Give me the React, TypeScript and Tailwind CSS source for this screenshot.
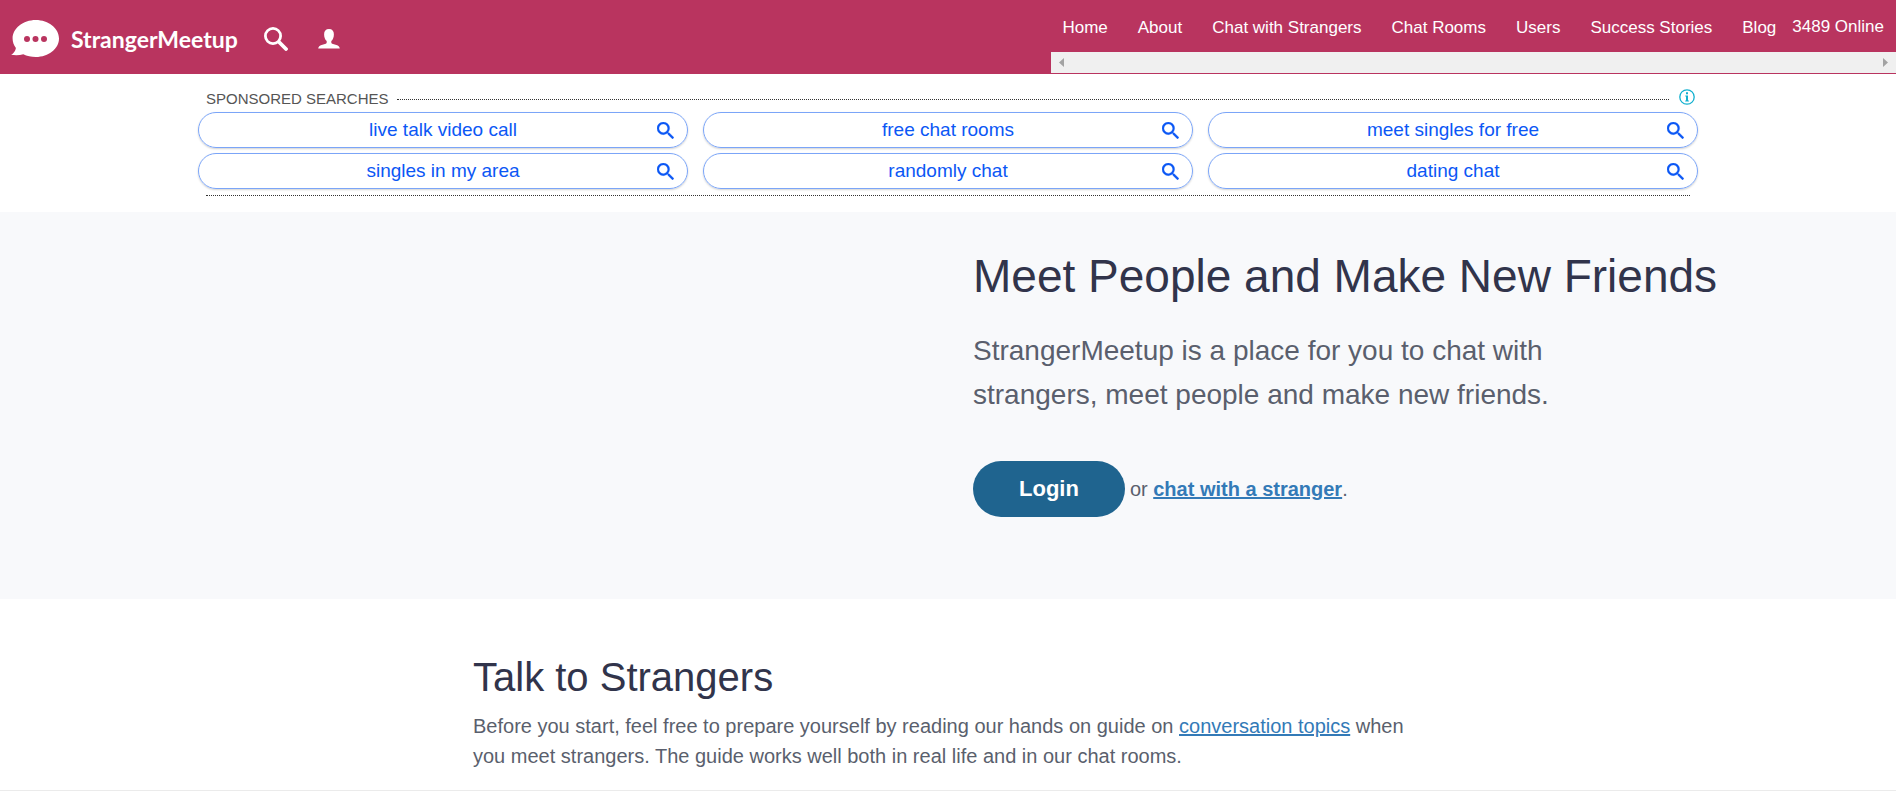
import type { ReactNode } from 'react'

const navLinks = [
  'Home',
  'About',
  'Chat with Strangers',
  'Chat Rooms',
  'Users',
  'Success Stories',
  'Blog',
]

const searches = [
  'live talk video call',
  'free chat rooms',
  'meet singles for free',
  'singles in my area',
  'randomly chat',
  'dating chat',
]

function BubbleLogo() {
  return (
    <svg width="48" height="37" viewBox="0 0 48 37" aria-hidden="true">
      <path
        fill="#fff"
        d="M24.800 0C37.600 0 48 8.300 48 18.500S37.600 37 24.800 37c-4.600 0-8.900-1-12.500-2.800-3.400 1.100-7.600 1.400-12.100.6 2.700-1.600 4.300-4 4.700-6.800C2.700 25.200 1.600 22 1.600 18.500 1.600 8.300 12 0 24.800 0Z"
      />
      <g fill="#b9345f">
        <circle cx="16" cy="19" r="3" />
        <circle cx="24.500" cy="19" r="3" />
        <circle cx="33" cy="19" r="3" />
      </g>
    </svg>
  )
}

function HeaderSearchIcon() {
  return (
    <svg width="24" height="24" viewBox="0 0 24 24" fill="none" stroke="#fff" aria-hidden="true">
      <circle cx="9" cy="9" r="7.600" strokeWidth="2.800" />
      <path d="m15 15 7 7" strokeWidth="3.800" strokeLinecap="round" />
    </svg>
  )
}

function UserIcon() {
  return (
    <svg width="22" height="20" viewBox="0 0 22 20" fill="#fff" aria-hidden="true">
      <path d="M11 0c3.200 0 4.900 2 4.900 5.200 0 3-1 5.500-2.600 6.900v1.500c0 .6.300 1 .9 1.200l4.200 1.200c2 .6 3.100 1.600 3.400 3.500H.2c.3-1.900 1.400-2.900 3.400-3.500l4.200-1.200c.6-.2.900-.6.900-1.200v-1.500C7.100 10.700 6.100 8.200 6.100 5.200 6.100 2 7.800 0 11 0Z" />
    </svg>
  )
}

function PillSearchIcon() {
  return (
    <svg width="17" height="17" viewBox="3 3 17.500 17.500" fill="#0b57f5" stroke="#0b57f5" strokeWidth="0.300" aria-hidden="true">
      <path d="M15.500 14h-.79l-.28-.27A6.471 6.471 0 0 0 16 9.500 6.500 6.500 0 1 0 9.500 16c1.610 0 3.090-.59 4.230-1.570l.27.28v.79l5 4.990L20.490 19l-4.990-5zm-6 0C7.010 14 5 11.990 5 9.500S7.010 5 9.500 5 14 7.010 14 9.500 11.990 14 9.500 14z" />
    </svg>
  )
}

function InfoIcon() {
  return (
    <svg width="16" height="16" viewBox="0 0 16 16" fill="none" aria-hidden="true">
      <circle cx="8" cy="8" r="7.200" stroke="#12b0cf" strokeWidth="1.300" />
      <path fill="#12b0cf" d="M7 3.300h2v2H7zM6.300 6.500H9v5h.9v1H6.200v-1H7v-4h-.7z" />
    </svg>
  )
}

function TextLink({ children, className = '' }: { children: ReactNode; className?: string }) {
  return (
    <a href="#" className={`text-[#337ab7] underline ${className}`}>
      {children}
    </a>
  )
}

function Header() {
  return (
    <header className="flex items-start justify-between bg-[#b9345f] pb-px text-white">
      <div className="flex items-center pt-5 pl-[11px]">
        <a href="#" className="flex items-center gap-3">
          <BubbleLogo />
          <span className="font-[Lato,sans-serif] text-[23px] leading-9 font-bold">StrangerMeetup</span>
        </a>
        <button aria-label="Search" className="ml-[26px]">
          <HeaderSearchIcon />
        </button>
        <button aria-label="Account" className="ml-[30px]">
          <UserIcon />
        </button>
      </div>

      <div>
        <nav className="flex h-[52px] items-center pt-[2px] pr-3 pl-[11px] text-[17px] leading-6 whitespace-nowrap">
          <ul className="flex gap-[30px] pt-[2px]">
            {navLinks.map((label) => (
              <li key={label}>
                <a href="#">{label}</a>
              </li>
            ))}
          </ul>
          <span className="ml-4">3489 Online</span>
        </nav>
        <div className="flex h-[21px] items-center justify-between bg-[#f0f0f0] px-2">
          <button aria-label="Scroll left">
            <svg width="5" height="9" viewBox="0 0 5 9" fill="#a3a3a3">
              <path d="M5 0v9L0 4.500z" />
            </svg>
          </button>
          <button aria-label="Scroll right">
            <svg width="5" height="9" viewBox="0 0 5 9" fill="#a3a3a3">
              <path d="M0 0v9l5-4.500z" />
            </svg>
          </button>
        </div>
      </div>
    </header>
  )
}

function SponsoredSearches() {
  return (
    <section className="mx-auto max-w-[1500px] pt-[15px] pb-4">
      <div className="flex items-center pr-[3px] pl-2 text-[15px] leading-[18px] text-[#555]">
        <h2>SPONSORED SEARCHES</h2>
        <div className="ml-2 flex-1 border-t border-dotted border-[#333]" />
        <a href="#" aria-label="About these ads" className="ml-[10px] pb-1">
          <InfoIcon />
        </a>
      </div>
      <ul className="mt-[3px] grid grid-cols-3 gap-x-[15px] gap-y-[5px]">
        {searches.map((term) => (
          <li key={term}>
            <a
              href="#"
              className="grid h-9 grid-cols-[17px_1fr_17px] items-center rounded-full border border-[#7ba5f8] px-[13px] text-center text-[19px] leading-6 text-[#0b57f5] shadow-[0_1px_2px_rgba(0,0,0,0.18)]"
            >
              <span className="col-start-2">{term}</span>
              <PillSearchIcon />
            </a>
          </li>
        ))}
      </ul>
      <div className="mx-2 mt-[6px] border-t border-dotted border-[#333]" />
    </section>
  )
}

function Hero() {
  return (
    <section className="grid grid-cols-2 bg-[#f8f9fb] pt-[39px] pb-[82px]">
      <div className="col-start-2 pl-[25px]">
        <h1 className="text-[46px] leading-[50px] text-[#31344b]">Meet People and Make New Friends</h1>
        <p className="mt-7 max-w-[600px] text-[28px] leading-[44px]">
          StrangerMeetup is a place for you to chat with strangers, meet people and make new friends.
        </p>
        <div className="mt-11 flex items-center gap-[5px] text-[20px] leading-[30px]">
          <button className="h-14 rounded-full bg-[#1f648f] px-[46px] text-[22px] font-bold text-white">Login</button>
          <span>
            or <TextLink className="font-bold">chat with a stranger</TextLink>.
          </span>
        </div>
      </div>
    </section>
  )
}

function TalkToStrangers() {
  return (
    <section className="border-b border-[#ebebeb] pt-14 pb-[19px]">
      <div className="mx-auto max-w-[950px]">
        <h2 className="text-[40px] leading-[44px] text-[#31344b]">Talk to Strangers</h2>
        <p className="mt-3 text-[20px] leading-[30px]">
          Before you start, feel free to prepare yourself by reading our hands on guide on{' '}
          <TextLink>conversation topics</TextLink> when you meet strangers. The guide works well both in real life and
          in our chat rooms.
        </p>
      </div>
    </section>
  )
}

export default function App() {
  return (
    <div className="bg-white font-['Liberation_Sans',Arial,sans-serif] text-[#5a5f6d]">
      <Header />
      <main>
        <SponsoredSearches />
        <Hero />
        <TalkToStrangers />
      </main>
    </div>
  )
}
